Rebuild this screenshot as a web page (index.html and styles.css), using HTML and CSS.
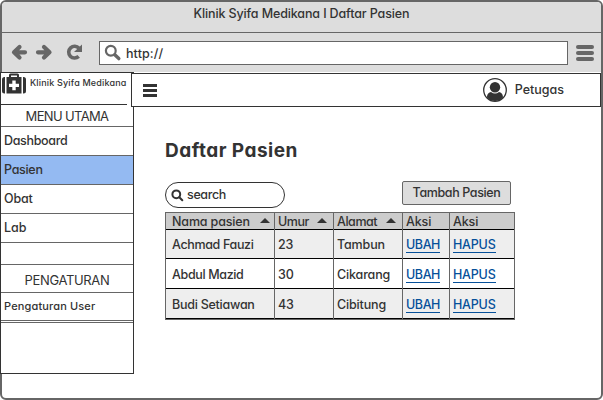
FILE: index.html
```html
<!DOCTYPE html>
<html lang="id">
<head>
<meta charset="utf-8">
<title>Klinik Syifa Medikana | Daftar Pasien</title>
<link rel="stylesheet" href="styles.css">
</head>
<body>
<div class="window">
  <div class="titlebar"><span class="t-title">Klinik Syifa Medikana I Daftar Pasien</span></div>
  <div class="toolbar">
    <svg class="nav-icons" width="74" height="18" viewBox="0 0 74 18" fill="none" stroke="#666" stroke-width="4.200" stroke-linecap="round" stroke-linejoin="round">
      <path d="M8.500 4L3 9.300L8.500 14.600M4 9.300H14"/>
      <path d="M33 4L38.500 9.300L33 14.600M37.500 9.300H27"/>
      <path stroke-width="3.600" stroke-linecap="butt" d="M68 5.200A5.900 5.900 0 1 0 67.700 13.400"/>
      <path fill="#666" stroke="none" d="M71 1.500V9H63Z"/>
    </svg>
    <div class="address">
      <svg width="18" height="18" viewBox="0 0 18 18" fill="none" stroke="#666"><circle cx="6.800" cy="6.800" r="4.900" stroke-width="2.200"/><path d="M10.800 10.800L14.800 14.600" stroke-width="3.400" stroke-linecap="round"/></svg>
      <span class="t-url">http://</span>
    </div>
    <div class="lines"><i></i><i></i><i></i></div>
  </div>
  <div class="page">
    <aside class="sidebar">
      <div class="brand">
        <svg width="26" height="22" viewBox="0 0 26 22" fill="#333"><path d="M4 4V20.500H3.500A2.500 2.500 0 0 1 1 18V6.500A2.500 2.500 0 0 1 3.500 4ZM22 4H22.500A2.500 2.500 0 0 1 25 6.500V18A2.500 2.500 0 0 1 22.500 20.500H22Z"/><path fill-rule="evenodd" d="M5.500 4H8V2Q8 .5 9.500 .5H16.500Q18 .5 18 2V4H20.500V20.500H5.500ZM10 4H16V2.500H10ZM11.300 7.500V10.800H8V14H11.300V17.300H14.700V14H18V10.800H14.700V7.500Z"/></svg>
        <span class="t-brand">Klinik Syifa Medikana</span>
      </div>
      <div class="heading main-heading"><span class="t-menu">MENU UTAMA</span></div>
      <nav class="menu">
        <a><span class="t-dash">Dashboard</span></a>
        <a class="active"><span class="t-pas">Pasien</span></a>
        <a><span class="t-obat">Obat</span></a>
        <a><span class="t-lab">Lab</span></a>
      </nav>
      <div class="spacer"></div>
      <div class="heading settings-heading"><span class="t-peng">PENGATURAN</span></div>
      <nav class="menu settings"><a><span class="t-user">Pengaturan User</span></a></nav>
    </aside>
    <main class="main">
      <header class="header">
        <div class="burger"><i></i><i></i><i></i></div>
        <div class="user">
          <svg width="24" height="24" viewBox="0 0 24 24"><circle cx="12" cy="12" r="11.300" fill="#fff" stroke="#333" stroke-width="1.300"/><circle cx="12" cy="9.300" r="5.200" fill="#333"/><path fill="#333" d="M4 19.500C4 15.500 6 14.500 8 14Q12 17 16 14C18 14.500 20 15.500 20 19.500Q17 23 12 23T4 19.500Z"/></svg>
          <span class="t-pet">Petugas</span>
        </div>
      </header>
      <section class="content">
        <h1><span class="t-h1">Daftar Pasien</span></h1>
        <div class="actions">
          <div class="search"><svg width="13" height="13" viewBox="0 0 13 13" fill="none" stroke="#333" stroke-width="2"><circle cx="5.300" cy="5.300" r="3.900"/><path d="M8.300 8.300L11.300 11.300" stroke-linecap="round"/></svg><span class="t-search">search</span></div>
          <button class="add"><span class="t-add">Tambah Pasien</span></button>
        </div>
        <div class="table">
          <div class="row head"><div><span class="t-nama">Nama pasien</span><b></b></div><div><span class="t-umur">Umur</span><b></b></div><div><span class="t-alamat">Alamat</span><b></b></div><div><span class="t-aksi">Aksi</span></div><div><span class="t-aksi">Aksi</span></div></div>
          <div class="row"><div><span class="t-achmad">Achmad Fauzi</span></div><div><span class="t-num">23</span></div><div><span class="t-tambun">Tambun</span></div><div><a class="t-ubah">UBAH</a></div><div><a class="t-hapus">HAPUS</a></div></div>
          <div class="row"><div><span class="t-abdul">Abdul Mazid</span></div><div><span class="t-num">30</span></div><div><span class="t-cik">Cikarang</span></div><div><a class="t-ubah">UBAH</a></div><div><a class="t-hapus">HAPUS</a></div></div>
          <div class="row"><div><span class="t-budi">Budi Setiawan</span></div><div><span class="t-num">43</span></div><div><span class="t-cib">Cibitung</span></div><div><a class="t-ubah">UBAH</a></div><div><a class="t-hapus">HAPUS</a></div></div>
        </div>
      </section>
    </main>
  </div>
</div>
</body>
</html>
```
FILE: styles.css
```css
* { box-sizing: border-box; }
body { margin: 0; background: #fff; color: #333; font: 500 12.5px/16px Inter, "Liberation Sans", sans-serif; font-feature-settings: "cv11" 1; }
span, a { white-space: nowrap; }
.window { width: 603px; height: 400px; border: 2px solid #666; border-radius: 6px; background: #fff; }
.titlebar { height: 31px; background: #ddd; border-bottom: 1px solid #666; border-radius: 4px 4px 0 0; text-align: center; padding-top: 4px; }
.t-title { letter-spacing: -.13px; }
.toolbar { height: 39px; background: #ddd; display: flex; align-items: center; padding: 0 5px 0 9px; }
.nav-icons { margin-top: -1px; }
.address { width: 469px; height: 24px; margin-left: 14px; background: #fff; border: 1px solid #666; display: flex; align-items: center; padding-left: 4px; gap: 4px; }
.t-url { padding-top: 2px; letter-spacing: .1px; }
.lines { margin-left: 8px; width: 18px; display: flex; flex-direction: column; gap: 2px; }
.lines i { height: 4px; border-radius: 2px; background: #666; }
.page { display: flex; margin-left: -2px; }
.sidebar { width: 134px; height: 302px; border: 1px solid #333; background: #fff; }
.brand { height: 32px; width: 126px; border-bottom: 1px solid #333; display: flex; align-items: flex-start; gap: 3px; }
.t-brand { font-size: 9px; line-height: 20px; letter-spacing: .17px; }
.heading { text-align: center; border-bottom: 1px solid #666; font-size: 13px; font-weight: 400; }
.main-heading { height: 22px; padding-top: 3px; }
.t-menu { letter-spacing: -.65px; }
.t-peng { letter-spacing: -.35px; }
.menu a { display: block; height: 29px; border-bottom: 1px solid #666; padding: 6px 0 0 3px; }
.t-dash { letter-spacing: -.33px; }
.t-pas { letter-spacing: -.3px; }
.t-obat { letter-spacing: -.15px; }
.menu .active { background: #94baf2; }
.spacer { height: 22px; border-bottom: 1px solid #666; }
.settings-heading { height: 28px; padding-top: 7px; }
.settings { height: 30px; border-bottom: 1px solid #666; }
.menu.settings a { height: 28px; font-size: 11px; padding-top: 5px; }
.t-user { letter-spacing: .14px; }
.main { width: 470px; margin-left: -3px; }
.header { margin-top: 1px; height: 34px; border: 1px solid #333; background: #fff; display: flex; align-items: center; justify-content: space-between; padding: 0 36px 0 11px; }
.burger { width: 14px; display: flex; flex-direction: column; gap: 2px; }
.burger i { height: 3px; background: #333; }
.user { display: flex; align-items: center; gap: 8px; }
.content { padding: 32px 0 0 34px; }
h1 { margin: 0; font-size: 19px; line-height: 24px; font-weight: 700; }
.t-h1 { letter-spacing: .48px; }
.actions { display: flex; justify-content: space-between; width: 346px; height: 43px; padding-top: 12px; margin-top: 6px; }
.search { width: 120px; height: 26px; margin-top: 1px; border: 1px solid #333; border-radius: 13px; display: flex; align-items: center; padding-left: 5px; gap: 4px; }
.t-search { letter-spacing: -.35px; margin-left: -1px; }
.add { width: 109px; height: 24px; border: 1px solid #666; border-radius: 2px; background: #ddd; color: #333; font: inherit; font-feature-settings: inherit; padding: 0; }
.t-add { letter-spacing: -.38px; }
.table { width: 350px; border: 1px solid #666; border-right: 0; }
.row { display: grid; grid-template-columns: 109px 59px 69px 47px 65px; height: 30px; background: #fff; letter-spacing: -.15px; }
.row:nth-child(even) { background: #eee; }
.row > div { border-right: 1px solid #666; box-shadow: inset 0 -1px #000; padding: 8px 0 0 3px; }
.row > div:first-child { padding-left: 6px; }
.row.head { height: 16px; background: #ccc; }
.row.head > div { padding-top: 1px; display: flex; justify-content: space-between; padding-right: 6px; }
.row.head > div:first-child { padding-right: 4px; }
.row b { width: 0; height: 0; margin-top: 4px; border: 5px solid transparent; border-top: 0; border-bottom-color: #333; }
.row a { color: #05509a; display: inline-block; height: 16px; line-height: 15px; border-bottom: 1px solid #05509a; }
.t-umur, .t-alamat { letter-spacing: -.45px; }
.t-achmad, .t-abdul { letter-spacing: -.35px; }
.t-budi { letter-spacing: -.25px; }
.t-ubah { letter-spacing: -.4px; }
.t-hapus { letter-spacing: -.2px; }
```
